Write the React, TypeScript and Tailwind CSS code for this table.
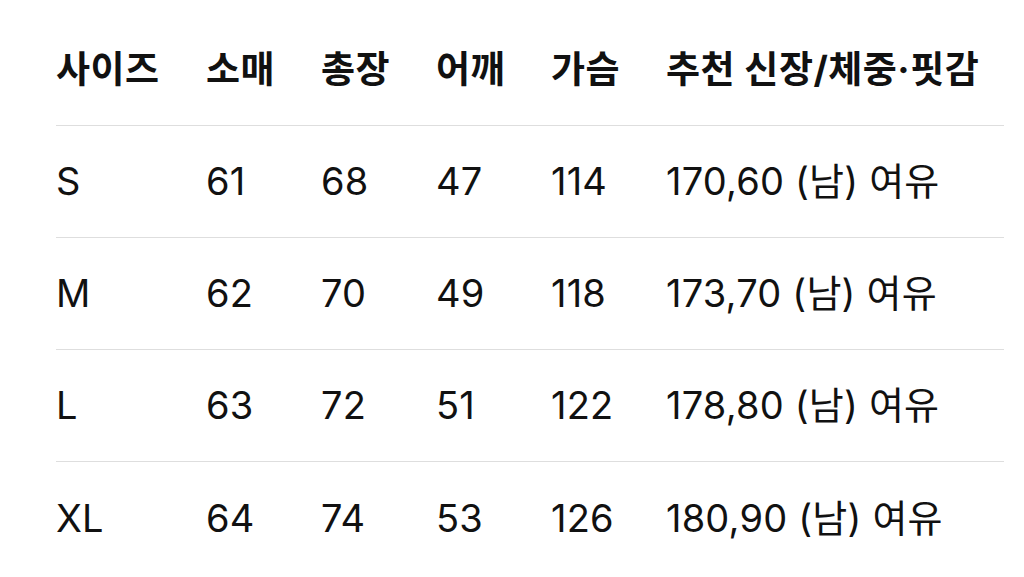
import React from 'react';

const headers = ['사이즈', '소매', '총장', '어깨', '가슴', '추천 신장/체중·핏감'];

const rows = [
  ['S', '61', '68', '47', '114', '170,60 (남) 여유'],
  ['M', '62', '70', '49', '118', '173,70 (남) 여유'],
  ['L', '63', '72', '51', '122', '178,80 (남) 여유'],
  ['XL', '64', '74', '53', '126', '180,90 (남) 여유'],
];

const cols = 'grid grid-cols-[150px_115px_115px_115px_115px_1fr] items-center';

const SizeTable = () => {
  return (
    <div
      className="min-h-screen bg-white pl-[56px] pr-[20px] pt-[14px] text-[#111111]"
      style={{ fontFamily: '"Inter", "Noto Sans CJK KR", sans-serif' }}
    >
      <div className={`${cols} h-[112px] border-b border-[#dedede] text-[37px] font-bold tracking-[0.5px]`}>
        {headers.map(h => (
          <div key={h} className="whitespace-nowrap">{h}</div>
        ))}
      </div>

      {rows.map((row, i) => (
        <div
          key={row[0]}
          className={`${cols} h-[112px] text-[38px] tracking-[0.2px] ${i < rows.length - 1 ? 'border-b border-[#dedede]' : ''}`}
        >
          {row.map((cell, j) => (
            <div key={j} className="whitespace-nowrap">{cell}</div>
          ))}
        </div>
      ))}
    </div>
  );
};

export default SizeTable;
